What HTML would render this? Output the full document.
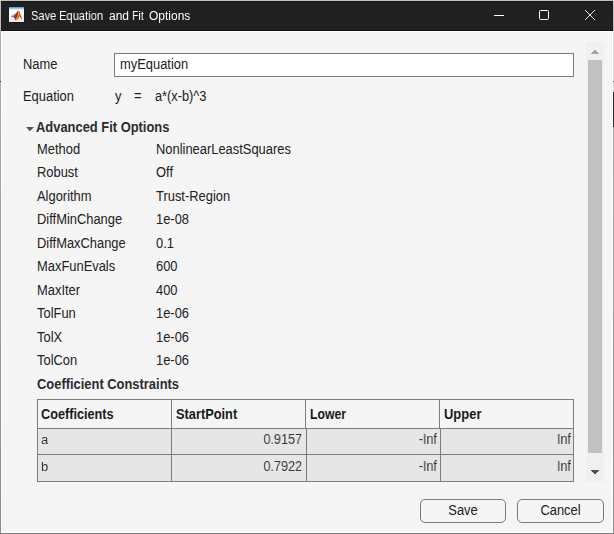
<!DOCTYPE html>
<html><head><meta charset="utf-8">
<style>
html,body{margin:0;padding:0;}
body{width:614px;height:534px;overflow:hidden;background:#f5f5f5;font-family:"Liberation Sans",sans-serif;font-size:13px;color:#212121;position:relative;}
.abs{position:absolute;}
.t{position:absolute;white-space:nowrap;line-height:16px;height:16px;font-size:14px;transform:scaleX(0.922);transform-origin:0 0;margin-top:-1px;}
.b{font-weight:bold;color:#2c2c2c;}
#titlebar{left:0;top:0;width:614px;height:31px;background:#202020;border-top:2px solid #181818;box-sizing:border-box;}
#topline{left:0;top:0;width:614px;height:1px;background:#c0c0c0;}
#leftline{left:0;top:0;width:1px;height:534px;background:linear-gradient(#c6c6c6 0,#b8b8b8 31px,#adadad 31px,#adadad 81px,#333 81px,#333 82px,#a8a8a8 82px,#8c8c8c 534px);}
#rightline{left:613px;top:0;width:1px;height:534px;background:linear-gradient(#c4c4c4 0,#bcbcbc 31px,#dadada 31px,#dadada 81px,#555 81px,#555 82px,#dadada 82px,#dadada 92px,#2a2a2a 92px,#2a2a2a 127px,#a2a2a2 127px,#8c8c8c 534px);}
#bottomline{left:0;top:533px;width:614px;height:1px;background:#7c7c7c;}
.tw{top:8px;color:#fff;font-size:12px;transform:none;transform-origin:0 0;margin-top:0;will-change:transform;}
#input{left:114px;top:53px;width:458px;height:22px;border:1px solid #7a7a7a;background:#fff;}
.lab{left:37px;}
.val{left:156px;}
.cell{position:absolute;background:#e6e6e6;}
.hl{position:absolute;background:#7d7d7d;height:1px;}
.vl{position:absolute;background:#7d7d7d;width:1px;}
.btn{position:absolute;border:1px solid #7a7a7a;border-radius:5px;height:22px;box-sizing:content-box;text-align:center;line-height:22px;}
.btn span{display:block;font-size:14px;transform:scaleX(0.922);margin-top:-1px;}
.num{position:absolute;white-space:nowrap;line-height:16px;height:16px;text-align:right;color:#363636;font-size:14px;transform:scaleX(0.9);transform-origin:100% 0;margin-top:-1px;will-change:transform;}
.th{position:absolute;white-space:nowrap;line-height:16px;height:16px;font-weight:bold;color:#1a1a1a;font-size:14px;transform:scaleX(0.906);transform-origin:0 0;}
</style></head><body>
<div class="abs" id="titlebar"></div>
<div class="abs" id="topline"></div>
<div class="abs" id="leftline"></div>
<div class="abs" id="rightline"></div>
<div class="abs" id="bottomline"></div>
<div class="abs" style="left:1px;top:31px;width:612px;height:1px;background:#fff"></div>
<div class="abs" style="left:1px;top:31px;width:1px;height:502px;background:#fff"></div>
<div class="abs" style="left:612px;top:31px;width:1px;height:502px;background:#fff"></div>
<div class="abs" style="left:1px;top:532px;width:612px;height:1px;background:#fff"></div>
<div class="abs" style="left:1px;top:30px;width:612px;height:1px;background:#111"></div>
<!-- matlab icon -->
<svg class="abs" style="left:8px;top:6px" width="18" height="18" viewBox="-1 -1 18 18">
<defs><linearGradient id="ig" x1="0" y1="0" x2="0" y2="1"><stop offset="0" stop-color="#4d8fca"/><stop offset="0.08" stop-color="#8fbce0"/><stop offset="0.2" stop-color="#ffffff"/><stop offset="1" stop-color="#e9e9e9"/></linearGradient></defs>
<rect x="0.500" y="0.500" width="15" height="15" fill="#101010" opacity="0.550"/>
<rect x="0" y="0" width="15" height="15" fill="url(#ig)"/>
<path d="M1.800 9.600 L5 7.800 L7.500 5.800 L8.600 7.500 L6.300 11 L4.500 10.500 Z" fill="#3f8fd2"/>
<path d="M7.500 5.800 L8.500 4 L9.200 3.800 L9.600 9 L7 13.200 L6 12.500 L5.500 10.800 L4.800 10.400 Z" fill="#b5261c"/>
<path d="M9.200 3.800 L10 3.800 L10.800 6.500 L10.600 9.300 L9.300 11.400 L7 13.300 L6.300 12.800 L8.500 9 Z" fill="#e2551b"/>
<path d="M10 3.900 L10.700 5.600 L11.600 8.600 L13.300 11.900 L12.500 11.800 L11.200 10 L10.500 9.600 Z" fill="#c02a20"/>
<path d="M9.400 4.200 L10 4.200 L10.200 7 L8.800 10.500 L7.200 13 L6.500 12.700 L8.600 9 Z" fill="#f59a1c"/>
<path d="M9.400 4.300 L10 4.300 L10 6.800 L9.200 7.800 Z" fill="#f8e020"/>
</svg>
<div class="t tw" style="left:30.600px;transform:scaleX(0.92)">Save</div>
<div class="t tw" style="left:59.400px;transform:scaleX(0.93)">Equation</div>
<div class="t tw" style="left:108.700px">and</div>
<div class="t tw" style="left:132px;transform:scaleX(0.88)">Fit</div>
<div class="t tw" style="left:148.700px">Options</div>
<!-- window controls -->
<div class="abs" style="left:494px;top:15px;width:10px;height:1px;background:#fff"></div>
<div class="abs" style="left:539px;top:10px;width:8px;height:8px;border:1px solid #fff;border-radius:1.500px"></div>
<svg class="abs" style="left:584px;top:9px" width="12" height="12" viewBox="0 0 12 12"><path d="M1 1 L11 11 M11 1 L1 11" stroke="#fff" stroke-width="0.9" fill="none"/></svg>

<div class="t" style="left:23px;top:57px">Name</div>
<div class="abs" id="input"></div>
<div class="t" style="left:120px;top:57px">myEquation</div>
<div class="t" style="left:23px;top:89px">Equation</div>
<div class="t" style="left:114.500px;top:89px">y</div>
<div class="t" style="left:133.900px;top:89px">=</div>
<div class="t" style="left:154.900px;top:89px;transform:scaleX(0.912)">a*(x-b)^3</div>

<svg class="abs" style="left:26px;top:126px" width="8" height="6" viewBox="0 0 8 6"><path d="M0 1 L8 1 L4 5.200 Z" fill="#555"/></svg>
<div class="t b" style="left:36px;top:120px">Advanced Fit Options</div>

<div class="t lab" style="top:142px">Method</div><div class="t val" style="top:142px">NonlinearLeastSquares</div>
<div class="t lab" style="top:165px">Robust</div><div class="t val" style="top:165px">Off</div>
<div class="t lab" style="top:189px">Algorithm</div><div class="t val" style="top:189px">Trust-Region</div>
<div class="t lab" style="top:212px">DiffMinChange</div><div class="t val" style="top:212px">1e-08</div>
<div class="t lab" style="top:236px">DiffMaxChange</div><div class="t val" style="top:236px">0.1</div>
<div class="t lab" style="top:259px">MaxFunEvals</div><div class="t val" style="top:259px">600</div>
<div class="t lab" style="top:283px">MaxIter</div><div class="t val" style="top:283px">400</div>
<div class="t lab" style="top:306px">TolFun</div><div class="t val" style="top:306px">1e-06</div>
<div class="t lab" style="top:330px">TolX</div><div class="t val" style="top:330px">1e-06</div>
<div class="t lab" style="top:353px">TolCon</div><div class="t val" style="top:353px">1e-06</div>
<div class="t b lab" style="top:377px">Coefficient Constraints</div>

<!-- table -->
<div class="cell" style="left:37px;top:428px;width:537px;height:53px"></div>
<div class="hl" style="left:37px;top:399px;width:537px"></div>
<div class="hl" style="left:37px;top:428px;width:537px"></div>
<div class="hl" style="left:37px;top:454px;width:537px"></div>
<div class="hl" style="left:37px;top:481px;width:537px"></div>
<div class="vl" style="left:37px;top:399px;height:83px"></div>
<div class="vl" style="left:171px;top:399px;height:83px"></div>
<div class="vl" style="left:305px;top:399px;height:30px"></div>
<div class="vl" style="left:306px;top:428px;height:54px"></div>
<div class="vl" style="left:439px;top:399px;height:30px"></div>
<div class="vl" style="left:440px;top:428px;height:54px"></div>
<div class="vl" style="left:573px;top:399px;height:83px"></div>
<div class="th" style="left:41.300px;top:406px">Coefficients</div>
<div class="th" style="left:175.500px;top:406px;transform:scaleX(0.915)">StartPoint</div>
<div class="th" style="left:310px;top:406px;transform:scaleX(0.875)">Lower</div>
<div class="th" style="left:444px;top:406px;transform:scaleX(0.925)">Upper</div>
<div class="num" style="left:41.300px;top:433px;text-align:left;font-size:13px;transform:none">a</div>
<div class="num" style="left:41.300px;top:460px;text-align:left;font-size:13px;transform:none">b</div>
<div class="num" style="left:201.600px;width:100px;top:432px">0.9157</div>
<div class="num" style="left:201.600px;width:100px;top:459px">0.7922</div>
<div class="num" style="left:336.600px;width:100px;top:432px">-Inf</div>
<div class="num" style="left:336.600px;width:100px;top:459px">-Inf</div>
<div class="num" style="left:470.600px;width:100px;top:432px">Inf</div>
<div class="num" style="left:470.600px;width:100px;top:459px">Inf</div>

<!-- scrollbar -->
<div class="abs" style="left:586px;top:42px;width:18px;height:440px;background:#f0f0f0"></div>
<div class="abs" style="left:588px;top:60px;width:14px;height:393px;background:#c1c1c1"></div>
<div class="abs" style="left:594px;top:50px;width:2px;height:1px;background:#a3a3a3"></div><div class="abs" style="left:593px;top:51px;width:4px;height:1px;background:#a3a3a3"></div><div class="abs" style="left:592px;top:52px;width:6px;height:1px;background:#a3a3a3"></div><div class="abs" style="left:591px;top:53px;width:8px;height:1px;background:#a3a3a3"></div>
<div class="abs" style="left:591px;top:470px;width:8px;height:1px;background:#505050"></div><div class="abs" style="left:592px;top:471px;width:6px;height:1px;background:#505050"></div><div class="abs" style="left:593px;top:472px;width:4px;height:1px;background:#505050"></div><div class="abs" style="left:594px;top:473px;width:2px;height:1px;background:#505050"></div>

<!-- buttons -->
<div class="btn" style="left:420px;top:499px;width:84px"><span>Save</span></div>
<div class="btn" style="left:517px;top:499px;width:85px"><span>Cancel</span></div>
</body></html>
